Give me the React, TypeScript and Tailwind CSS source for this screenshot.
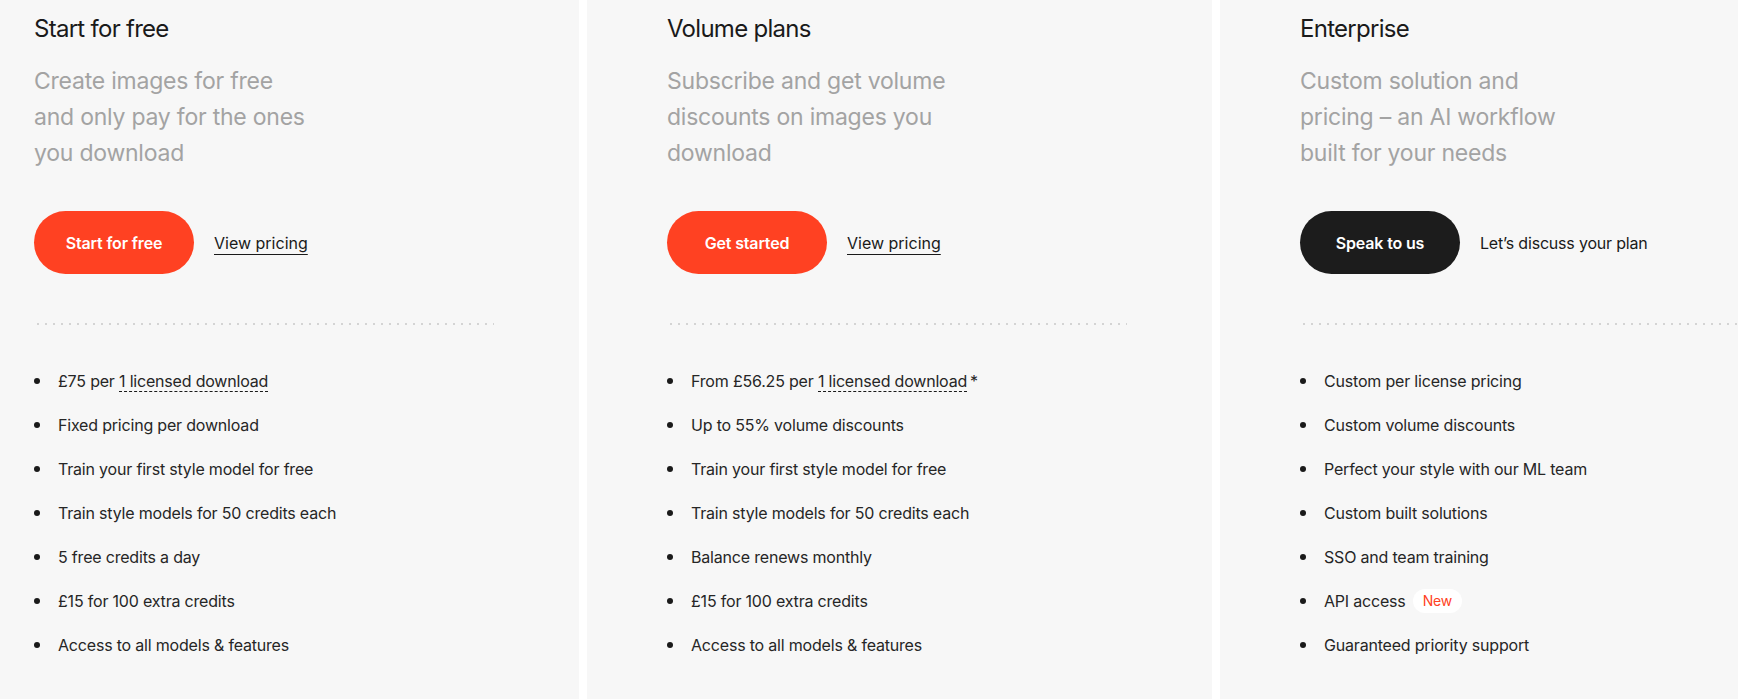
import React from "react";

type Plan = {
  title: string;
  subtitle: React.ReactNode;
  button: string;
  dark?: boolean;
  side: React.ReactNode;
  features: React.ReactNode[];
};

const Licensed = () => (
  <span className="border-b border-dashed border-[#1a1a1a]">1 licensed download</span>
);

const plans: Plan[] = [
  {
    title: "Start for free",
    subtitle: (
      <>
        Create images for free
        <br />
        and only pay for the ones
        <br />
        you download
      </>
    ),
    button: "Start for free",
    side: (
      <a href="#" className="underline underline-offset-[5px] decoration-1 text-[#1a1a1a]">
        View pricing
      </a>
    ),
    features: [
      <>
        £75 per <Licensed />
      </>,
      "Fixed pricing per download",
      "Train your first style model for free",
      "Train style models for 50 credits each",
      "5 free credits a day",
      "£15 for 100 extra credits",
      "Access to all models & features",
    ],
  },
  {
    title: "Volume plans",
    subtitle: (
      <>
        Subscribe and get volume
        <br />
        discounts on images you
        <br />
        download
      </>
    ),
    button: "Get started",
    side: (
      <a href="#" className="underline underline-offset-[5px] decoration-1 text-[#1a1a1a]">
        View pricing
      </a>
    ),
    features: [
      <>
        From £56.25 per <Licensed />
        <span className="ml-[3px]">*</span>
      </>,
      "Up to 55% volume discounts",
      "Train your first style model for free",
      "Train style models for 50 credits each",
      "Balance renews monthly",
      "£15 for 100 extra credits",
      "Access to all models & features",
    ],
  },
  {
    title: "Enterprise",
    subtitle: (
      <>
        Custom solution and
        <br />
        pricing – an AI workflow
        <br />
        built for your needs
      </>
    ),
    button: "Speak to us",
    dark: true,
    side: <span className="tracking-[-0.012em] text-[#1a1a1a]">Let’s discuss your plan</span>,
    features: [
      "Custom per license pricing",
      "Custom volume discounts",
      "Perfect your style with our ML team",
      "Custom built solutions",
      "SSO and team training",
      <span className="inline-flex items-center">
        API access
        <span className="ml-[7px] inline-flex h-[24px] items-center rounded-full bg-white px-[10px] text-[14px] font-normal text-[#ff4122]">
          New
        </span>
      </span>,
      "Guaranteed priority support",
    ],
  },
];

function PlanCard({ plan }: { plan: Plan }) {
  return (
    <div className="w-[625px] shrink-0 bg-[#f7f7f7] pl-[80px] pr-[85px] pt-[13px]">
      <h2 className="text-[24px] leading-[32px] font-normal tracking-[-0.03em] text-[#1a1a1a]">
        {plan.title}
      </h2>
      <p className="mt-[18px] text-[23px] leading-[36px] font-normal tracking-[-0.01em] text-[#a3a3a3]">
        {plan.subtitle}
      </p>
      <div className="mt-[40px] flex items-center gap-[20px]">
        <button
          className={
            plan.dark
              ? "h-[63px] w-[160px] rounded-full bg-[#1c1c1c] text-[16px] font-semibold tracking-[-0.01em] text-white"
              : "h-[63px] w-[160px] rounded-full bg-[#ff4122] text-[16px] font-semibold tracking-[-0.01em] text-white"
          }
        >
          {plan.button}
        </button>
        <div className="text-[16px] leading-[24px]">{plan.side}</div>
      </div>
      <div className="mt-[49px] h-[2px] w-[460px] bg-[radial-gradient(circle,#d4d4d4_1px,transparent_1.3px)] bg-[length:8px_2px] bg-repeat-x" />
      <ul className="mt-[44px] flex flex-col gap-[20px]">
        {plan.features.map((f, i) => (
          <li
            key={i}
            className="flex items-center text-[16px] leading-[24px] tracking-[-0.012em] text-[#262626]"
          >
            <span className="mr-[18px] h-[6px] w-[6px] shrink-0 rounded-full bg-[#1a1a1a]" />
            <span>{f}</span>
          </li>
        ))}
      </ul>
    </div>
  );
}

export default function App() {
  return (
    <div
      className="h-[699px] w-full overflow-hidden bg-white"
      style={{ fontFamily: "Inter, 'Noto Sans', sans-serif" }}
    >
      <div className="ml-[-46px] flex h-full gap-[8px]">
        {plans.map((p) => (
          <PlanCard key={p.title} plan={p} />
        ))}
      </div>
    </div>
  );
}
